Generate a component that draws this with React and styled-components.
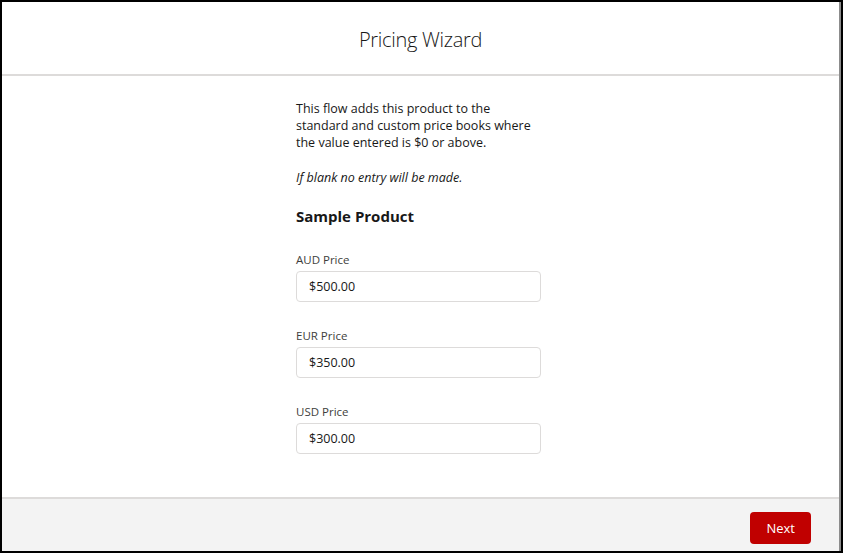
import React from 'react'
import styled, { createGlobalStyle } from 'styled-components'

const GlobalStyle = createGlobalStyle`
    html, body {
        margin: 0;
        padding: 0;
        background: #fff;
    }
    * {
        box-sizing: border-box;
    }
`

const Frame = styled.div`
    width: 843px;
    height: 553px;
    border: 2px solid #000;
    display: flex;
    font-family: "Open Sans", "Noto Sans", sans-serif;
    color: #181818;
`

const Modal = styled.div`
    flex: 1;
    display: flex;
    flex-direction: column;
    border-right: 2px solid #8c8c8c;
    background: #fff;
`

const Header = styled.header`
    height: 74px;
    display: flex;
    align-items: center;
    justify-content: center;
    padding: 2px 0 0 0;
    border-bottom: 2px solid #dddbda;
    h2 {
        margin: 0;
        font-size: 20px;
        font-weight: 300;
        letter-spacing: -0.3px;
        color: #181818;
    }
`

const Body = styled.main`
    flex: 1;
    display: flex;
    justify-content: center;
    padding: 24px 4px 0 0;
`

const Column = styled.div`
    width: 245px;
    font-size: 12.5px;
    line-height: 17px;
    p {
        margin: 0 0 18px;
    }
    .note {
        font-style: italic;
        margin-bottom: 20px;
    }
`

const Heading = styled.h3`
    margin: 0 0 26px;
    font-size: 15px;
    font-weight: 700;
    line-height: 20px;
`

const Field = styled.div`
    margin-bottom: 26px;
    label {
        display: block;
        font-size: 11.5px;
        line-height: 16px;
        color: #3e3e3c;
        margin-bottom: 3px;
    }
`

const Input = styled.input`
    display: block;
    width: 100%;
    height: 31px;
    border: 1px solid #dddbda;
    border-radius: 4px;
    padding: 0 12px;
    font: inherit;
    font-size: 12.5px;
    color: #181818;
    background: #fff;
    outline: none;
`

const Footer = styled.footer`
    height: 54px;
    border-top: 2px solid #dddbda;
    background: #f3f3f3;
    display: flex;
    justify-content: flex-end;
    align-items: flex-start;
    padding: 13px 28px 0 0;
`

const Button = styled.button`
    height: 32px;
    padding: 0 16px;
    border: none;
    border-radius: 4px;
    background: #c00000;
    color: #fff;
    font: inherit;
    font-size: 13px;
    cursor: pointer;
`

const fields = [
    { label: 'AUD Price', value: '$500.00' },
    { label: 'EUR Price', value: '$350.00' },
    { label: 'USD Price', value: '$300.00' },
]

export default function App() {
    return (
        <>
            <GlobalStyle />
            <Frame>
                <Modal>
                    <Header>
                        <h2>Pricing Wizard</h2>
                    </Header>
                    <Body>
                        <Column>
                            <p>This flow adds this product to the standard and custom price books where the value entered is $0 or above.</p>
                            <p className="note">If blank no entry will be made.</p>
                            <Heading>Sample Product</Heading>
                            {fields.map(f => (
                                <Field key={f.label}>
                                    <label>{f.label}</label>
                                    <Input defaultValue={f.value} />
                                </Field>
                            ))}
                        </Column>
                    </Body>
                    <Footer>
                        <Button>Next</Button>
                    </Footer>
                </Modal>
            </Frame>
        </>
    )
}
